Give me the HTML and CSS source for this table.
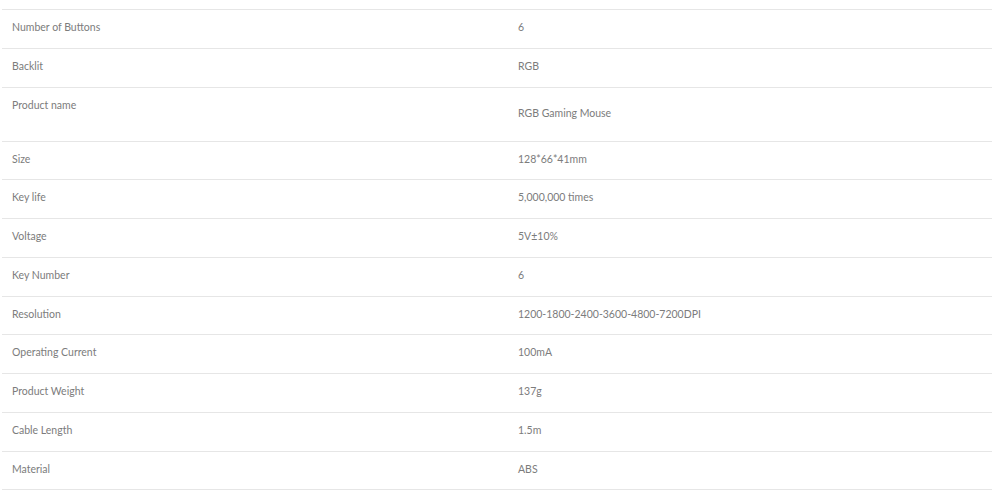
FILE: index.html
```html
<!DOCTYPE html>
<html>
<head>
<meta charset="utf-8">
<link rel="stylesheet" href="styles.css">
</head>
<body>
<div class="specs">
  <div class="row"><div class="label">Number of Buttons</div><div class="value">6</div></div>
  <div class="row"><div class="label">Backlit</div><div class="value">RGB</div></div>
  <div class="row tall"><div class="label">Product name</div><div class="value">RGB Gaming Mouse</div></div>
  <div class="row"><div class="label">Size</div><div class="value">128*66*41mm</div></div>
  <div class="row"><div class="label">Key life</div><div class="value">5,000,000 times</div></div>
  <div class="row"><div class="label">Voltage</div><div class="value">5V±10%</div></div>
  <div class="row"><div class="label">Key Number</div><div class="value">6</div></div>
  <div class="row"><div class="label">Resolution</div><div class="value">1200-1800-2400-3600-4800-7200DPI</div></div>
  <div class="row"><div class="label">Operating Current</div><div class="value">100mA</div></div>
  <div class="row"><div class="label">Product Weight</div><div class="value">137g</div></div>
  <div class="row"><div class="label">Cable Length</div><div class="value">1.5m</div></div>
  <div class="row"><div class="label">Material</div><div class="value">ABS</div></div>
</div>
</body>
</html>
```
FILE: styles.css
```css
html, body {
  margin: 0;
  padding: 0;
  background: #fff;
}
body {
  font-family: Lato, "Liberation Sans", sans-serif;
  font-size: 10.5px;
  color: #7c7c7c;
}
.specs {
  margin: 9px 8px 0 2px;
  border-top: 1px solid #e6e6e6;
}
.row {
  display: grid;
  grid-template-columns: 504px 1fr;
  height: 38.75px;
  box-sizing: border-box;
  border-bottom: 1px solid #e6e6e6;
}
.row.tall {
  height: 54px;
}
.label, .value {
  padding: 10px 10px 0;
  line-height: 14px;
}
.tall .value {
  padding-top: 18px;
}
.value {
  padding-left: 12px;
}
```
